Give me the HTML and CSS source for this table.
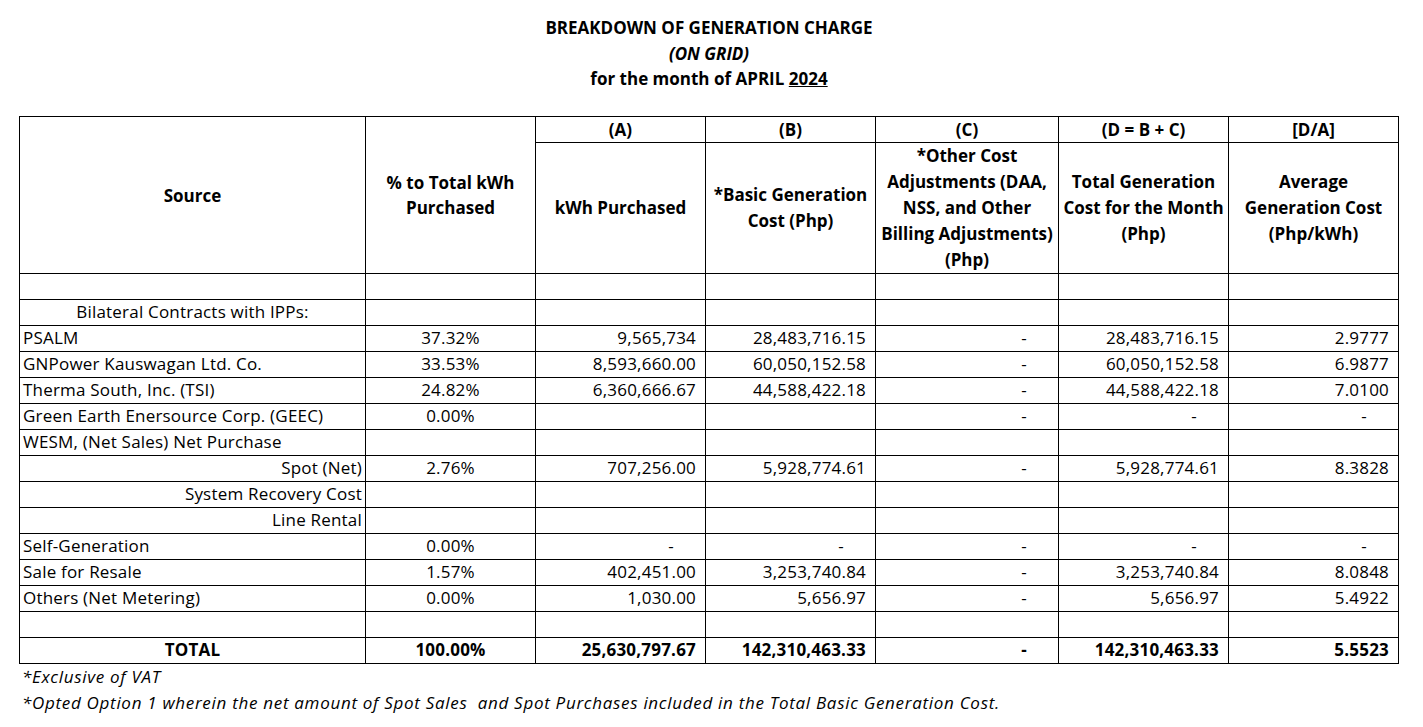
FILE: index.html
```html
<!DOCTYPE html>
<html>
<head>
<meta charset="utf-8">
<link rel="stylesheet" href="styles.css">
</head>
<body>
<div class="sheet">
  <div class="title">
    <div class="t1">BREAKDOWN OF GENERATION CHARGE</div>
    <div class="t2">(ON GRID)</div>
    <div class="t3">for the month of APRIL <u>2024</u></div>
  </div>
  <table class="grid">
    <colgroup>
      <col class="c-src"><col class="c-n"><col class="c-n"><col class="c-n"><col class="c-w"><col class="c-n"><col class="c-n">
    </colgroup>
    <thead>
      <tr class="h1">
        <th rowspan="2" class="hmain">Source</th>
        <th rowspan="2" class="hmain">% to Total kWh<br>Purchased</th>
        <th>(A)</th>
        <th>(B)</th>
        <th>(C)</th>
        <th>(D = B + C)</th>
        <th>[D/A]</th>
      </tr>
      <tr class="h2">
        <th>kWh Purchased</th>
        <th>*Basic Generation<br>Cost (Php)</th>
        <th>*Other Cost<br>Adjustments (DAA,<br>NSS, and Other<br>Billing Adjustments)<br>(Php)</th>
        <th>Total Generation<br>Cost for the Month<br>(Php)</th>
        <th>Average<br>Generation Cost<br>(Php/kWh)</th>
      </tr>
    </thead>
    <tbody>
      <tr><td></td><td></td><td></td><td></td><td></td><td></td><td></td></tr>
      <tr><td class="sub">Bilateral Contracts with IPPs:</td><td></td><td></td><td></td><td></td><td></td><td></td></tr>
      <tr><td>PSALM</td><td class="pct">37.32%</td><td class="num">9,565,734</td><td class="num">28,483,716.15</td><td class="num"><span class="dash">-</span></td><td class="num">28,483,716.15</td><td class="num">2.9777</td></tr>
      <tr><td>GNPower Kauswagan Ltd. Co.</td><td class="pct">33.53%</td><td class="num">8,593,660.00</td><td class="num">60,050,152.58</td><td class="num"><span class="dash">-</span></td><td class="num">60,050,152.58</td><td class="num">6.9877</td></tr>
      <tr><td>Therma South, Inc. (TSI)</td><td class="pct">24.82%</td><td class="num">6,360,666.67</td><td class="num">44,588,422.18</td><td class="num"><span class="dash">-</span></td><td class="num">44,588,422.18</td><td class="num">7.0100</td></tr>
      <tr><td>Green Earth Enersource Corp. (GEEC)</td><td class="pct">0.00%</td><td></td><td></td><td class="num"><span class="dash">-</span></td><td class="num"><span class="dash">-</span></td><td class="num"><span class="dash">-</span></td></tr>
      <tr><td>WESM, (Net Sales) Net Purchase</td><td></td><td></td><td></td><td></td><td></td><td></td></tr>
      <tr><td class="rt">Spot (Net)</td><td class="pct">2.76%</td><td class="num">707,256.00</td><td class="num">5,928,774.61</td><td class="num"><span class="dash">-</span></td><td class="num">5,928,774.61</td><td class="num">8.3828</td></tr>
      <tr><td class="rt">System Recovery Cost</td><td></td><td></td><td></td><td></td><td></td><td></td></tr>
      <tr><td class="rt">Line Rental</td><td></td><td></td><td></td><td></td><td></td><td></td></tr>
      <tr><td>Self-Generation</td><td class="pct">0.00%</td><td class="num"><span class="dash">-</span></td><td class="num"><span class="dash">-</span></td><td class="num"><span class="dash">-</span></td><td class="num"><span class="dash">-</span></td><td class="num"><span class="dash">-</span></td></tr>
      <tr><td>Sale for Resale</td><td class="pct">1.57%</td><td class="num">402,451.00</td><td class="num">3,253,740.84</td><td class="num"><span class="dash">-</span></td><td class="num">3,253,740.84</td><td class="num">8.0848</td></tr>
      <tr><td>Others (Net Metering)</td><td class="pct">0.00%</td><td class="num">1,030.00</td><td class="num">5,656.97</td><td class="num"><span class="dash">-</span></td><td class="num">5,656.97</td><td class="num">5.4922</td></tr>
      <tr><td></td><td></td><td></td><td></td><td></td><td></td><td></td></tr>
      <tr class="total"><td class="ctr">TOTAL</td><td class="pct">100.00%</td><td class="num">25,630,797.67</td><td class="num">142,310,463.33</td><td class="num"><span class="dash">-</span></td><td class="num">142,310,463.33</td><td class="num">5.5523</td></tr>
    </tbody>
  </table>
  <div class="notes">
    <div>*Exclusive of VAT</div>
    <div>*Opted Option 1 wherein the net amount of Spot Sales&nbsp; and Spot Purchases included in the Total Basic Generation Cost.</div>
  </div>
</div>
</body>
</html>
```

FILE: styles.css
```css
html, body {
  margin: 0;
  padding: 0;
  background: #ffffff;
}
body {
  font-family: "Open Sans", "Noto Sans", "Liberation Sans", sans-serif;
  font-size: 17px;
  color: #000000;
}
.sheet {
  width: 1380px;
  margin-left: 19px;
  padding-top: 15px;
}
.title {
  text-align: center;
  font-weight: bold;
  line-height: 25.5px;
  height: 101px;
}
.t2 {
  font-style: italic;
}
.grid {
  border-collapse: collapse;
  table-layout: fixed;
  width: 1380px;
}
.c-src { width: 346px; }
.c-n { width: 170px; }
.c-w { width: 183px; }
.grid th, .grid td {
  border: 1px solid #000000;
  padding: 0 3px;
  white-space: nowrap;
  overflow: hidden;
}
.grid th {
  font-weight: bold;
  text-align: center;
  vertical-align: middle;
  line-height: 26px;
}
.h1 th {
  height: 25px;
  line-height: 24px;
  vertical-align: bottom;
}
.h1 th.hmain {
  vertical-align: middle;
  line-height: 25px;
}
.h2 th {
  height: 129px;
}
.grid td {
  height: 24px;
  line-height: 24px;
  vertical-align: bottom;
  padding-bottom: 1px;
  letter-spacing: 0.2px;
}
.sub {
  text-align: center;
}
.rt {
  text-align: right;
}
.ctr {
  text-align: center;
}
.pct {
  text-align: center;
}
.num {
  text-align: right;
  padding-right: 9px !important;
  letter-spacing: 0.1px;
}
.dash {
  display: inline-block;
  padding-right: 22px;
}
.total td {
  font-weight: bold;
}
.notes {
  font-style: italic;
  padding-left: 3px;
  line-height: 26px;
  letter-spacing: 0.7px;
}
```
